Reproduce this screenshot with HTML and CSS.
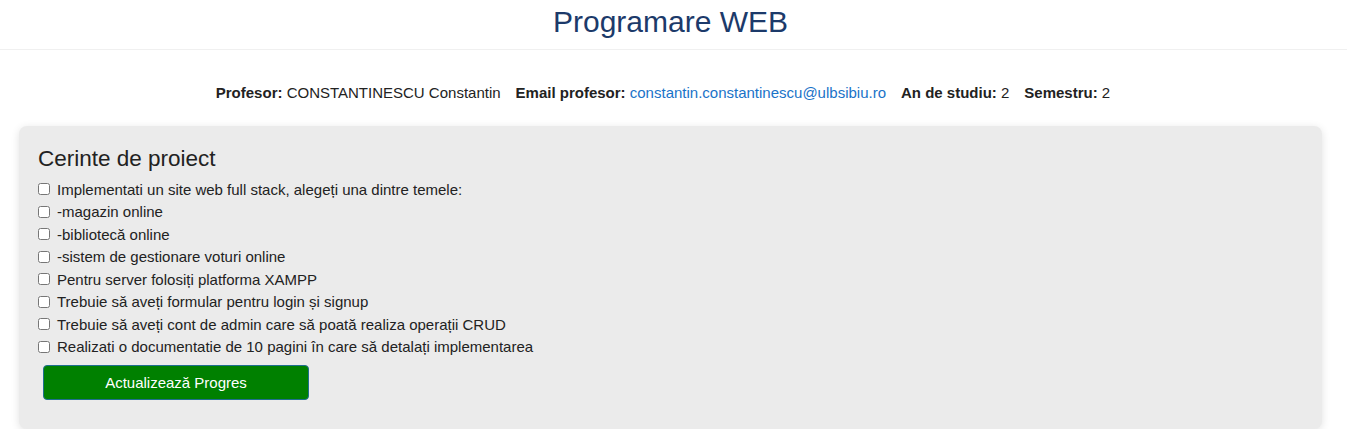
FILE: index.html
```html
<!DOCTYPE html>
<html lang="ro">
<head>
<meta charset="utf-8">
<title>Programare WEB</title>
<link rel="stylesheet" href="styles.css">
</head>
<body>
<header class="site-header">
  <h1 class="title">Programare WEB</h1>
</header>
<section class="info">
  <span class="info-item"><b>Profesor:</b> CONSTANTINESCU Constantin</span>
  <span class="info-item"><b>Email profesor:</b> <a class="mail" href="#">constantin.constantinescu@ulbsibiu.ro</a></span>
  <span class="info-item"><b>An de studiu:</b> 2</span>
  <span class="info-item"><b>Semestru:</b> 2</span>
</section>
<main class="card">
  <h2 class="card-title">Cerinte de proiect</h2>
  <ul class="tasks">
    <li class="task"><input type="checkbox" class="cb"><span>Implementati un site web full stack, alegeți una dintre temele:</span></li>
    <li class="task"><input type="checkbox" class="cb"><span>-magazin online</span></li>
    <li class="task"><input type="checkbox" class="cb"><span>-bibliotecă online</span></li>
    <li class="task"><input type="checkbox" class="cb"><span>-sistem de gestionare voturi online</span></li>
    <li class="task"><input type="checkbox" class="cb"><span>Pentru server folosiți platforma XAMPP</span></li>
    <li class="task"><input type="checkbox" class="cb"><span>Trebuie să aveți formular pentru login și signup</span></li>
    <li class="task"><input type="checkbox" class="cb"><span>Trebuie să aveți cont de admin care să poată realiza operații CRUD</span></li>
    <li class="task"><input type="checkbox" class="cb"><span>Realizati o documentatie de 10 pagini în care să detalați implementarea</span></li>
  </ul>
  <button class="btn" type="button">Actualizează Progres</button>
</main>
</body>
</html>
```
FILE: styles.css
```css
* { box-sizing: border-box; }
body {
  margin: 0;
  padding-right: 6px;
  font-family: "Liberation Sans", Arial, sans-serif;
  font-size: 15px;
  color: #222;
  background: #fff;
}
.site-header {
  height: 50px;
  margin-right: -6px;
  padding-right: 6px;
  border-bottom: 1px solid #f0f0f0;
  display: flex;
  justify-content: center;
  align-items: center;
}
.title {
  margin: 0;
  font-size: 30px;
  font-weight: normal;
  color: #1c3a6a;
  line-height: 1;
  padding-bottom: 5px;
}
.info {
  display: flex;
  justify-content: center;
  font-size: 15px;
  height: 76px;
  padding-top: 34px;
}
.info-item { margin-right: 15px; }
.info-item b { font-weight: bold; }
.mail { color: #1a73c8; text-decoration: none; }
.card {
  margin: 0 19px;
  background: #ebebeb;
  border-radius: 8px;
  box-shadow: 0 2px 8px rgba(0,0,0,0.12);
  padding: 20px 19px 29px;
}
.card-title {
  margin: 0 0 6px;
  font-size: 22.5px;
  font-weight: normal;
  color: #222;
}
.tasks {
  list-style: none;
  margin: 0;
  padding: 0;
}
.task {
  display: flex;
  align-items: center;
  height: 22.5px;
  font-size: 15px;
  color: #222;
}
.cb {
  width: 12px;
  height: 12px;
  margin: 0 7px 0 0;
}
.btn {
  margin: 7px 0 0 5px;
  width: 266px;
  height: 35px;
  background: #008000;
  color: #fff;
  border: 1px solid #1f6f8f;
  border-radius: 4px;
  font-family: "Liberation Sans", Arial, sans-serif;
  font-size: 15px;
}
```
